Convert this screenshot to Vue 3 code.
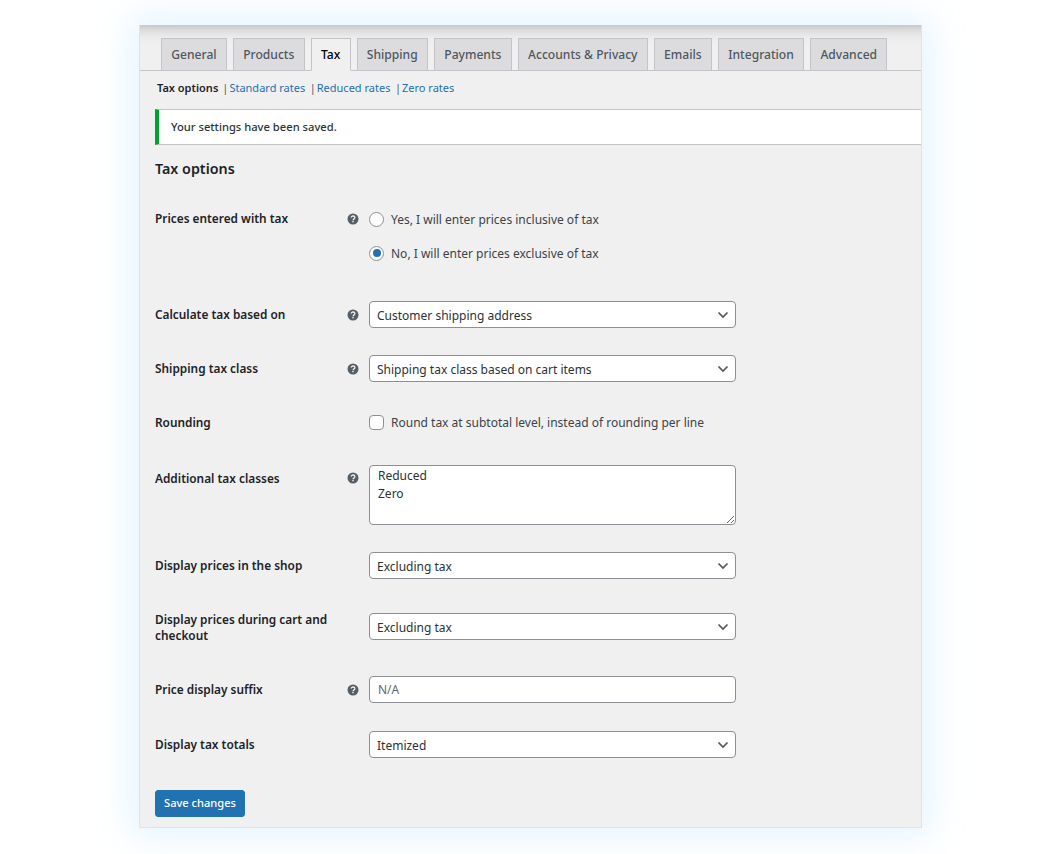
<script setup>
const tabs = ['General', 'Products', 'Tax', 'Shipping', 'Payments', 'Accounts & Privacy', 'Emails', 'Integration', 'Advanced']
const subs = ['Standard rates', 'Reduced rates', 'Zero rates']
</script>

<template>
  <div class="page">
    <main class="panel">
      <nav class="tabs">
        <a v-for="t in tabs" :key="t" class="tab" :class="{ active: t === 'Tax' }">{{ t }}</a>
      </nav>
      <div class="subs">
        <strong class="cur">Tax options</strong>
        <span v-for="s in subs" :key="s" class="sub"><i>|</i><a>{{ s }}</a></span>
      </div>
      <div class="notice">Your settings have been saved.</div>
      <h2>Tax options</h2>

      <section class="row r-prices">
        <label class="lbl">Prices entered with tax</label>
        <span class="help"><svg viewBox="0 0 12 12"><circle cx="6" cy="6" r="5.5" fill="#555d66"/><path d="M4.2 4.6c0-1 .8-1.6 1.8-1.6s1.9.6 1.9 1.5c0 1.4-1.8 1.3-1.8 2.7" fill="none" stroke="#f0f0f1" stroke-width="1.3"/><rect x="5.3" y="7.9" width="1.4" height="1.4" fill="#f0f0f1"/></svg></span>
        <div class="radios">
          <label class="choice"><span class="radio"></span>Yes, I will enter prices inclusive of tax</label>
          <label class="choice"><span class="radio on"></span>No, I will enter prices exclusive of tax</label>
        </div>
      </section>

      <section class="row r-calc">
        <label class="lbl">Calculate tax based on</label>
        <span class="help"><svg viewBox="0 0 12 12"><circle cx="6" cy="6" r="5.5" fill="#555d66"/><path d="M4.2 4.6c0-1 .8-1.6 1.8-1.6s1.9.6 1.9 1.5c0 1.4-1.8 1.3-1.8 2.7" fill="none" stroke="#f0f0f1" stroke-width="1.3"/><rect x="5.3" y="7.9" width="1.4" height="1.4" fill="#f0f0f1"/></svg></span>
        <div class="select">Customer shipping address<svg class="chev" viewBox="0 0 12 8"><path d="M1.5 1.5 6 6l4.500-4.500" fill="none" stroke="#50575e" stroke-width="1.700"/></svg></div>
      </section>

      <section class="row r-ship">
        <label class="lbl">Shipping tax class</label>
        <span class="help"><svg viewBox="0 0 12 12"><circle cx="6" cy="6" r="5.5" fill="#555d66"/><path d="M4.2 4.6c0-1 .8-1.6 1.8-1.6s1.9.6 1.9 1.5c0 1.4-1.8 1.3-1.8 2.7" fill="none" stroke="#f0f0f1" stroke-width="1.3"/><rect x="5.3" y="7.9" width="1.4" height="1.4" fill="#f0f0f1"/></svg></span>
        <div class="select">Shipping tax class based on cart items<svg class="chev" viewBox="0 0 12 8"><path d="M1.5 1.5 6 6l4.500-4.500" fill="none" stroke="#50575e" stroke-width="1.700"/></svg></div>
      </section>

      <section class="row r-round">
        <label class="lbl">Rounding</label>
        <span class="help"></span>
        <label class="choice"><span class="check"></span>Round tax at subtotal level, instead of rounding per line</label>
      </section>

      <section class="row r-classes">
        <label class="lbl">Additional tax classes</label>
        <span class="help"><svg viewBox="0 0 12 12"><circle cx="6" cy="6" r="5.5" fill="#555d66"/><path d="M4.2 4.6c0-1 .8-1.6 1.8-1.6s1.9.6 1.9 1.5c0 1.4-1.8 1.3-1.8 2.7" fill="none" stroke="#f0f0f1" stroke-width="1.3"/><rect x="5.3" y="7.9" width="1.4" height="1.4" fill="#f0f0f1"/></svg></span>
        <textarea class="area" readonly>Reduced
Zero</textarea>
      </section>

      <section class="row r-shop">
        <label class="lbl">Display prices in the shop</label>
        <span class="help"></span>
        <div class="select">Excluding tax<svg class="chev" viewBox="0 0 12 8"><path d="M1.5 1.5 6 6l4.500-4.500" fill="none" stroke="#50575e" stroke-width="1.700"/></svg></div>
      </section>

      <section class="row r-cart">
        <label class="lbl">Display prices during cart and checkout</label>
        <span class="help"></span>
        <div class="select">Excluding tax<svg class="chev" viewBox="0 0 12 8"><path d="M1.5 1.5 6 6l4.500-4.500" fill="none" stroke="#50575e" stroke-width="1.700"/></svg></div>
      </section>

      <section class="row r-suffix">
        <label class="lbl">Price display suffix</label>
        <span class="help"><svg viewBox="0 0 12 12"><circle cx="6" cy="6" r="5.5" fill="#555d66"/><path d="M4.2 4.6c0-1 .8-1.6 1.8-1.6s1.9.6 1.9 1.5c0 1.4-1.8 1.3-1.8 2.7" fill="none" stroke="#f0f0f1" stroke-width="1.3"/><rect x="5.3" y="7.9" width="1.4" height="1.4" fill="#f0f0f1"/></svg></span>
        <input class="text" placeholder="N/A" />
      </section>

      <section class="row r-totals">
        <label class="lbl">Display tax totals</label>
        <span class="help"></span>
        <div class="select">Itemized<svg class="chev" viewBox="0 0 12 8"><path d="M1.5 1.5 6 6l4.500-4.500" fill="none" stroke="#50575e" stroke-width="1.700"/></svg></div>
      </section>

      <button class="save">Save changes</button>
    </main>
  </div>
</template>

<style scoped>
.page {
  width: 1044px;
  height: 854px;
  box-sizing: border-box;
  padding: 25px 0 0 139px;
  background: #fff;
  overflow: hidden;
  font-family: "Noto Sans", "Open Sans", sans-serif;
  font-size: 12px;
  color: #2c3338;
}
.panel {
  width: 783px;
  height: 803px;
  box-sizing: border-box;
  padding: 13px 0 0 15px;
  background: linear-gradient(#c8c8ca 0, #dcdcdd 5px, #ebebec 12px, #f0f0f1 20px);
  border: 1px solid #dfe3e6;
  border-top: 0;
  box-shadow: 0 0 34px 8px rgba(190, 228, 255, 0.42);
}
.tabs {
  display: flex;
  height: 32px;
  margin-left: -15px;
  padding-left: 21px;
  gap: 6.100px;
  border-bottom: 1px solid #c3c4c7;
}
.tab {
  box-sizing: border-box;
  height: 33px;
  padding: 0 9.250px;
  line-height: 32px;
  background: #dcdcde;
  border: 1px solid #c3c4c7;
  font-size: 12.100px;
  font-weight: 500;
  color: #50575e;
  white-space: nowrap;
}
.tab.active {
  background: #f0f0f1;
  border-bottom-color: #f0f0f1;
  color: #000;
}
.subs {
  display: flex;
  align-items: center;
  height: 17px;
  margin: 8px 0 0 2px;
  font-size: 11px;
  white-space: nowrap;
}
.cur { font-weight: 600; color: #1d2327; margin-right: 4px; }
.sub { margin-right: 4.500px; color: #2271b1; }
.sub i { font-style: normal; color: #50575e; margin-right: 1px; }
.notice {
  box-sizing: border-box;
  height: 36px;
  margin-top: 13px;
  padding-left: 12px;
  line-height: 34px;
  background: #fff;
  border: 1px solid #c3c4c7;
  border-left: 4px solid #00a32a;
  border-right: 0;
  font-size: 11.200px;
  font-weight: 500;
}
h2 {
  margin: 13px 0 0;
  height: 22px;
  line-height: 22px;
  font-size: 14.300px;
  font-weight: 600;
  color: #1d2327;
}
.row {
  display: grid;
  grid-template-columns: 191px 23px 367px;
  align-items: start;
}
.lbl { font-size: 11.850px; font-weight: 600; color: #1d2327; line-height: 16px; padding-top: 5px; }
.help { display: flex; height: 27px; align-items: center; }
.help svg { width: 12px; height: 12px; margin-left: 1px; }
.r-prices { margin-top: 29px; height: 73px; }
.r-prices .lbl { padding-top: 1px; }
.r-prices .help { margin-top: -4px; }
.r-calc { margin-top: 19px; }
.r-ship { margin-top: 27px; }
.r-round { margin-top: 27px; height: 27px; }
.r-classes { margin-top: 29px; }
.r-shop { margin-top: 27px; }
.r-cart { margin-top: 34px; }
.r-suffix { margin-top: 33px; }
.r-totals { margin-top: 28px; }
.r-cart .lbl { padding-top: 0; margin-top: -2px; }
.r-classes .help { margin-top: -1px; }
.radios { display: flex; flex-direction: column; gap: 14px; }
.choice { display: flex; align-items: center; height: 20px; gap: 7px; color: #3c434a; white-space: nowrap; }
.r-round .choice { height: 27px; }
.radio, .check {
  box-sizing: border-box;
  flex: none;
  width: 15px;
  height: 15px;
  background: #fff;
  border: 1px solid #8c8f94;
}
.radio { border-radius: 50%; display: flex; align-items: center; justify-content: center; }
.radio.on::after { content: ""; width: 8px; height: 8px; border-radius: 50%; background: #2271b1; }
.check { border-radius: 4px; }
.select, .text, .area {
  box-sizing: border-box;
  width: 367px;
  background: #fff;
  border: 1px solid #8c8f94;
  border-radius: 4px;
  font: inherit;
  color: #2c3338;
}
.select {
  display: flex;
  align-items: center;
  justify-content: space-between;
  height: 27px;
  padding: 1px 6px 0 7px;
}
.chev { width: 12px; height: 8px; }
.text { height: 27px; padding: 0 8px; outline: none; }
.text::placeholder { color: #646970; opacity: 1; }
.area {
  display: block;
  height: 60px;
  padding: 1px 8px;
  line-height: 18px;
  resize: both;
  outline: none;
}
.save {
  display: block;
  width: 90px;
  height: 27px;
  margin-top: 32px;
  padding: 0 0 2px;
  background: #2271b1;
  border: 1px solid #2271b1;
  border-radius: 3px;
  color: #fff;
  font: inherit;
  font-size: 11.100px;
  font-weight: 500;
}
</style>
